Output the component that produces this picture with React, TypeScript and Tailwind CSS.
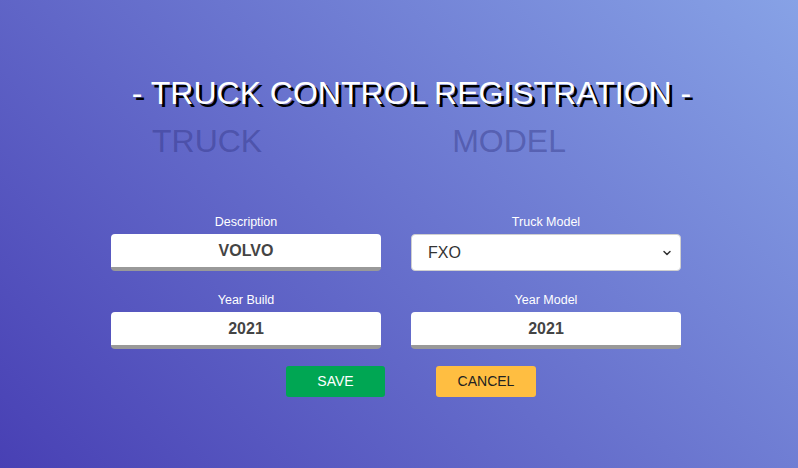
import React from 'react';
import { ChevronDown } from 'lucide-react';

const Field: React.FC<{ label: string; value: string }> = ({ label, value }) => (
  <div className="flex flex-col">
    <label className="text-center text-[12.5px] leading-[16px] text-white mb-1">{label}</label>
    <input
      readOnly
      value={value}
      className="h-[37px] w-full rounded-[4px] bg-white border-b-4 border-[#999999] text-center text-[16px] font-bold text-[#444] outline-none"
    />
  </div>
);

const App: React.FC = () => {
  return (
    <div className="min-h-[468px] w-full bg-[linear-gradient(45deg,#4840b4,#87a2e6)] font-['Liberation_Sans',Arial,sans-serif] overflow-hidden">
      <div className="pt-[75px] flex flex-col items-center">
        <h1 className="pl-[25px] text-[32px] leading-[37px] text-white [text-shadow:3px_3px_0_#000]">
          - TRUCK CONTROL REGISTRATION -
        </h1>
        <div className="mt-[11px] flex justify-center gap-[190px] pr-[80px] text-[32px] leading-[37px] text-[#2a2c7a]/40">
          <span>TRUCK</span>
          <span>MODEL</span>
        </div>
      </div>

      {/* Form */}
      <div className="mt-[54px] ml-[111px] w-[570px] grid grid-cols-2 gap-x-[30px] gap-y-[21px]">
        <Field label="Description" value="VOLVO" />
        <div className="flex flex-col">
          <label className="text-center text-[12.5px] leading-[16px] text-white mb-1">Truck Model</label>
          <div className="relative">
            <select
              defaultValue="FXO"
              className="h-[37px] w-full appearance-none rounded-[4px] border border-[#cfcfcf] bg-white pl-4 text-[16px] text-[#333] outline-none"
            >
              <option>FXO</option>
              <option>FH</option>
              <option>FM</option>
            </select>
            <ChevronDown
              className="pointer-events-none absolute right-[8px] top-[13px] w-[12px] h-[12px] text-[#333]"
              strokeWidth={3}
            />
          </div>
        </div>
        <Field label="Year Build" value="2021" />
        <Field label="Year Model" value="2021" />
      </div>

      <div className="mt-[17px] flex justify-center gap-[51px] pl-[24px]">
        <button className="h-[31px] w-[99px] rounded-[3px] bg-[#00a653] text-[14px] text-white">SAVE</button>
        <button className="h-[31px] w-[100px] rounded-[3px] bg-[#ffbe41] text-[14px] text-[#222]">CANCEL</button>
      </div>
    </div>
  );
};

export default App;
